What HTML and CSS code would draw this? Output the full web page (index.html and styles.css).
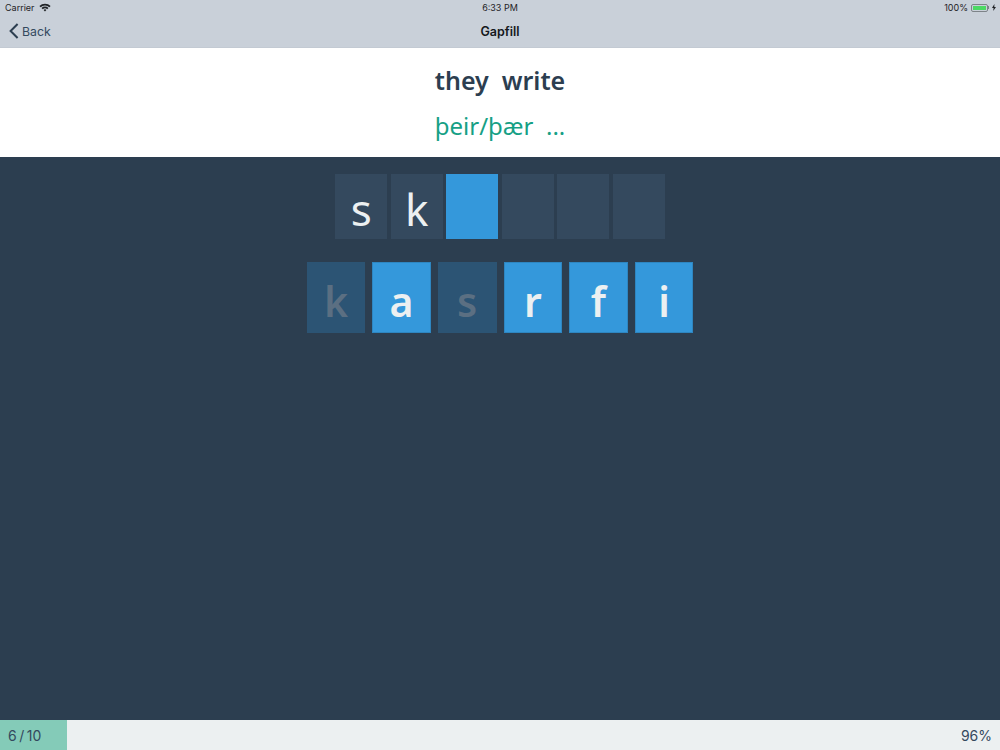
FILE: index.html

```html
<!DOCTYPE html>
<html lang="en">
  <head>
    <meta charset="UTF-8" />
    <title>Gapfill</title>
    <link rel="stylesheet" href="styles.css">
  </head>
  <body>
    <main class="app">
      <header class="topbar">
        <div class="status">
          <div class="status_left">
            <span>Carrier</span>
            <svg class="wifi" width="12" height="9" viewBox="0 0 13 9">
              <path d="M0.4 2.9 A8.6 8.6 0 0 1 12.6 2.9 L11.2 4.3 A6.6 6.6 0 0 0 1.8 4.3 Z" fill="#1f2226" />
              <path d="M2.7 5.1 A5.3 5.3 0 0 1 10.3 5.1 L8.9 6.5 A3.4 3.4 0 0 0 4.1 6.5 Z" fill="#1f2226" />
              <path d="M5 7.2 A2.1 2.1 0 0 1 8 7.2 L6.5 8.8 Z" fill="#1f2226" />
            </svg>
          </div>
          <span class="status_time">6:33 PM</span>
          <div class="status_right">
            <span>100%</span>
            <span class="battery"><span class="battery_fill"></span></span>
            <span class="battery_tip"></span>
            <svg width="4" height="7" viewBox="0 0 4 7">
              <path d="M2.4 0 L0 3.9 H1.6 L1.2 7 L4 2.9 H2.3 Z" fill="#1f2226" />
            </svg>
          </div>
        </div>
        <nav class="navbar">
          <a class="back">
            <svg width="10" height="16" viewBox="0 0 10 16">
              <path d="M8.6 1 L1.6 8 L8.6 15" fill="none" stroke="#2c3e50" stroke-width="2" />
            </svg>
            <span>Back</span>
          </a>
          <h1>Gapfill</h1>
        </nav>
      </header>

      <section class="question">
        <h2>they&nbsp; write</h2>
        <p>þeir/þær &nbsp;...</p>
      </section>

      <section class="game">
        <div class="slots">
          <div class="slot">s</div>
          <div class="slot">k</div>
          <div class="slot active"></div>
          <div class="slot"></div>
          <div class="slot"></div>
          <div class="slot"></div>
        </div>
        <div class="letters">
          <button class="letter used">k</button>
          <button class="letter">a</button>
          <button class="letter used">s</button>
          <button class="letter">r</button>
          <button class="letter">f</button>
          <button class="letter">i</button>
        </div>
      </section>

      <footer class="progress">
        <div class="progress_done">6&thinsp;/&thinsp;10</div>
        <div class="progress_score">96%</div>
      </footer>
    </main>
  </body>
</html>
```

FILE: styles.css

```css
* {
  box-sizing: border-box;
  margin: 0;
  padding: 0;
}

body {
  background-color: #2c3e50;
  font-family: "Noto Sans", sans-serif;
}

.app {
  display: flex;
  flex-direction: column;
  width: 1000px;
  height: 750px;
  overflow: hidden;
}

/* top bar */
.topbar {
  height: 48px;
  background-color: #c9d0d9;
  font-family: Inter, sans-serif;
  border-bottom: 1px solid #c3cad3;
}

.status {
  display: flex;
  justify-content: space-between;
  align-items: center;
  height: 15px;
  padding: 0 4px 0 5px;
  font-size: 9px;
  color: #1f2226;
  position: relative;
}
.status_left,
.status_right {
  display: flex;
  align-items: center;
}
.status_left {
  gap: 4px;
}
.status_time {
  position: absolute;
  left: 0;
  right: 0;
  text-align: center;
}
.battery {
  display: block;
  width: 17px;
  height: 8px;
  margin-left: 3px;
  padding: 1px;
  border: 1px solid #7d8388;
  border-radius: 2px;
}
.battery_fill {
  display: block;
  height: 100%;
  background-color: #4cd964;
}
.battery_tip {
  width: 1px;
  height: 3px;
  margin-right: 3px;
  background-color: #7d8388;
}

.navbar {
  display: flex;
  justify-content: center;
  align-items: center;
  height: 32px;
  position: relative;
}
.navbar h1 {
  font-size: 12.5px;
  font-weight: 600;
  color: #15181c;
}
.back {
  display: flex;
  align-items: center;
  gap: 3px;
  position: absolute;
  left: 9px;
  top: 8px;
  font-size: 12.3px;
  color: #34495e;
}

/* question */
.question {
  display: flex;
  flex-direction: column;
  align-items: center;
  height: 109px;
  padding-top: 14px;
  background-color: #fff;
}
.question h2 {
  font-size: 25px;
  line-height: 36px;
  font-weight: 600;
  color: #2c3e50;
}
.question p {
  margin-top: 10px;
  font-size: 24px;
  line-height: 36px;
  color: #16a085;
}

/* letters */
.game {
  flex: 1;
  display: flex;
  flex-direction: column;
  align-items: center;
  gap: 23px;
  padding-top: 17px;
}
.slots {
  display: flex;
  gap: 3.7px;
}
.slot {
  width: 51.8px;
  height: 65px;
  background-color: #34495e;
  color: #ecf0f1;
  font-size: 44px;
  line-height: 70px;
  text-align: center;
}
.slot.active {
  background-color: #3498db;
}
.letters {
  display: flex;
  gap: 7px;
}
.letter {
  width: 58.6px;
  height: 71px;
  border: 1px solid #2e86c1;
  background-color: #3498db;
  color: #ecf0f1;
  font-family: "Noto Sans", sans-serif;
  font-size: 41px;
  font-weight: 600;
  line-height: 76px;
}
.letter.used {
  background-color: #2c5474;
  border-color: #2c5474;
  color: #5b6f82;
}

/* bottom bar */
.progress {
  display: flex;
  justify-content: space-between;
  align-items: center;
  height: 30px;
  background-color: #ecf0f1;
  color: #34495e;
  font-family: Inter, sans-serif;
  font-size: 14px;
}
.progress_done {
  display: flex;
  align-items: center;
  width: 67px;
  height: 100%;
  padding-left: 8px;
  background-color: #84cbb8;
}
.progress_score {
  padding-right: 8px;
}
```
